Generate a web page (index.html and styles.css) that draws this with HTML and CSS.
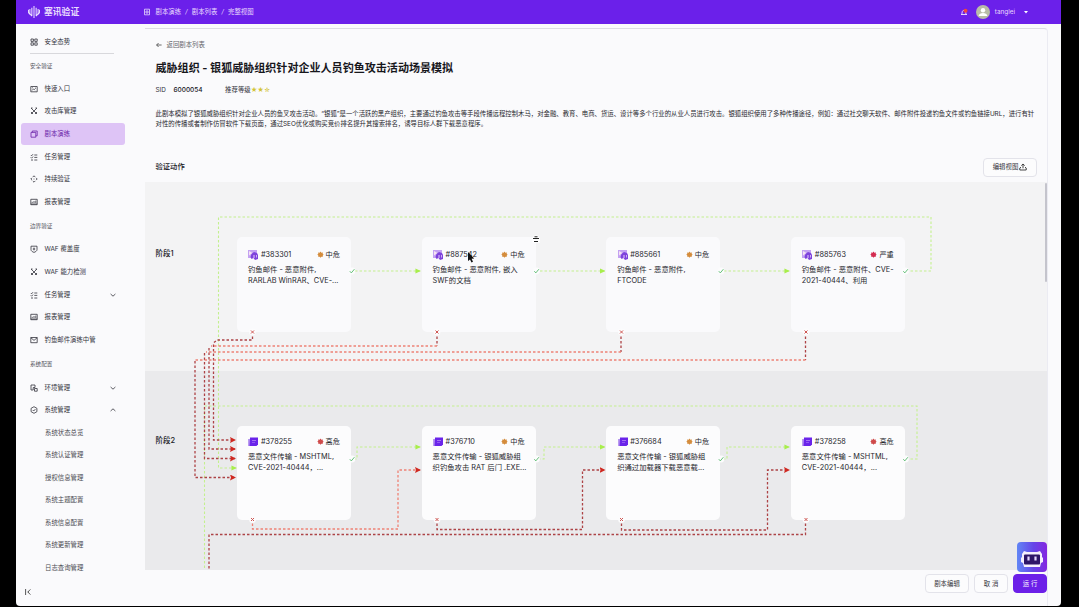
FILE: index.html
```html
<!DOCTYPE html>
<html lang="zh-CN">
<head>
    <meta charset="UTF-8">
    <meta name="viewport" content="width=device-width, initial-scale=1.0">
    <title>完整视图</title>
    <link rel="stylesheet" href="styles.css">
</head>
<body>
    <svg class="sprite">
        <symbol id="i-grid" viewBox="0 0 8 8"><path d="M1 1h2.4v2.4H1zM4.8 1h2.4v2.4H4.8zM1 4.8h2.4v2.4H1zM4.8 4.8h2.4v2.4H4.8z"/></symbol>
        <symbol id="i-image" viewBox="0 0 8 8"><path d="M.8 1.5h6.4v5.3H.8zM2 5.5l1.7-1.7 1.2 1.4M5 3.2h1M2 2.8h.8"/></symbol>
        <symbol id="i-swords" viewBox="0 0 8 8"><path d="M1 1l6 6M7 1L1 7M1 1h1.6M7 1H5.4M1 5l2 2M7 5L5 7"/></symbol>
        <symbol id="i-book" viewBox="0 0 8 8"><path d="M1 2.4h4.8v4.8H1zM2.3 2.4V1h4.9v4.8H5.8"/></symbol>
        <symbol id="i-crumb" viewBox="0 0 8 8"><path d="M1.5 1.2h5v5.6h-5zM3 3h2v2H3z"/></symbol>
        <symbol id="i-tasks" viewBox="0 0 8 8"><path d="M.8 2l.8.8L3 1.2M4.3 2h3M.8 4.4l.8.8L3 3.6M4.3 4.4h3M1 7h2M4.3 7h3"/></symbol>
        <symbol id="i-diamond" viewBox="0 0 8 8"><path d="M2.8 2L4 .8 5.2 2M2.8 6L4 7.2 5.2 6M2 2.8L.8 4 2 5.2M6 2.8L7.2 4 6 5.2M3.6 4h.8"/></symbol>
        <symbol id="i-report" viewBox="0 0 8 8"><path d="M.8 1.3h6.4v5.4H.8zM2.2 5V3.8M4 5V3M5.8 5V2.6M.8 6h6.4"/></symbol>
        <symbol id="i-shield" viewBox="0 0 8 8"><path d="M1 1.2h6v3.4C7 6 5.6 6.8 4 7.4 2.4 6.8 1 6 1 4.6zM4 2.6v2.8M2.8 4h2.4"/></symbol>
        <symbol id="i-mail" viewBox="0 0 8 8"><path d="M.8 1.5h6.4v5.2H.8zM.8 1.7L4 4.4l3.2-2.7"/></symbol>
        <symbol id="i-env" viewBox="0 0 8 8"><path d="M1 1h4v2.5H3.2V6H1zM4.5 4.5h2.7v2.7H4.5z"/></symbol>
        <symbol id="i-gear" viewBox="0 0 8 8"><path d="M4 .7l2.9 1.6v3.4L4 7.3 1.1 5.7V2.3zM2.7 4l1 1 1.7-1.9"/></symbol>
        <symbol id="i-down" viewBox="0 0 8 8"><path d="M1.6 3l2.4 2.2L6.4 3"/></symbol>
        <symbol id="i-up" viewBox="0 0 8 8"><path d="M1.6 5L4 2.8 6.4 5"/></symbol>
        <symbol id="i-node" viewBox="0 0 10 10">
            <path fill="#c3a2f2" d="M0 0h9v8H0z"/>
            <path fill="#f6e4f2" d="M1 1l3.500 2L1 5.500z"/>
            <path fill="#7d42dc" d="M3.500 4l2.500-2 3 1 1 2v4l-3 1-1.500-2-2 1-1-2z"/>
            <path fill="#e4c9fa" d="M5.500 5h1v3h-1zM8 5h.8v2.500H8z"/>
        </symbol>
        <symbol id="i-file" viewBox="0 0 10 10">
            <path fill="#b99af0" d="M0 2h3v7H0z"/>
            <path fill="#6a24ea" d="M2 .5h8v7L8.500 9H1.500z"/>
            <path fill="#b98df5" d="M4 3h4v.8H4zM4 5.400h3v.7H4z"/>
        </symbol>
        <symbol id="i-risk" viewBox="0 0 8 8">
            <path d="M4 .6l1 1.3 1.8-.2-.3 1.6L7.600 4l-1 1 .1 1.700-1.700-.1L4 7.600l-1-1-1.700.1.2-1.700L.4 4l1.100-.8-.3-1.600L3 1.900z"/>
        </symbol>
    </svg>

    <div class="app">
        <header class="topbar">
            <div class="brand">
                <svg class="brand-mark" viewBox="0 0 14 14"><path d="M7 0v14M4.500 2v9.800M9.500 2v9.800M2.200 3.500v5.300l2.300 3M11.800 3.500v5.300l-2.300 3M.5 4.500v3L2.200 10M13.500 4.500v3L11.800 10"/></svg>
                <span>塞讯验证</span>
            </div>
            <nav class="crumbs">
                <svg class="icon"><use href="#i-crumb"/></svg>
                <span>剧本演练</span><i>/</i><span>剧本列表</span><i>/</i><span>完整视图</span>
            </nav>
            <div class="user">
                <svg class="bell" viewBox="0 0 8 8"><path d="M1 6.500h6M1.800 6.300l.5-2.800C2.700 2 5 2 5.600 3.500l.4 2.800" fill="none" stroke="#fff" stroke-width=".8"/><circle cx="5.500" cy="2.800" r="2" fill="#f0443c"/></svg>
                <svg class="avatar" viewBox="0 0 14 14"><circle cx="7" cy="7" r="7" fill="#b9bca8"/><circle cx="7" cy="5.200" r="2.200" fill="#fff"/><path d="M2.600 11c.4-4 8.400-4 8.800 0z" fill="#fff"/></svg>
                <span>tanglei</span>
                <svg class="caret" viewBox="0 0 4 3"><path d="M0 0h4L2 2.600z" fill="#fff"/></svg>
            </div>
        </header>

        <aside class="sidebar">
            <a class="item"><svg class="icon"><use href="#i-grid"/></svg>安全态势</a>
            <hr>
            <h4>安全验证</h4>
            <a class="item"><svg class="icon"><use href="#i-image"/></svg>快速入口</a>
            <a class="item"><svg class="icon"><use href="#i-swords"/></svg>攻击库管理</a>
            <a class="item active"><svg class="icon"><use href="#i-book"/></svg>剧本演练</a>
            <a class="item"><svg class="icon"><use href="#i-tasks"/></svg>任务管理</a>
            <a class="item"><svg class="icon"><use href="#i-diamond"/></svg>持续验证</a>
            <a class="item"><svg class="icon"><use href="#i-report"/></svg>报表管理</a>
            <h4>边界验证</h4>
            <a class="item"><svg class="icon"><use href="#i-shield"/></svg>WAF 覆盖度</a>
            <a class="item"><svg class="icon"><use href="#i-swords"/></svg>WAF 能力检测</a>
            <a class="item"><svg class="icon"><use href="#i-tasks"/></svg>任务管理<svg class="icon chev"><use href="#i-down"/></svg></a>
            <a class="item"><svg class="icon"><use href="#i-report"/></svg>报表管理</a>
            <a class="item"><svg class="icon"><use href="#i-mail"/></svg>钓鱼邮件演练中管</a>
            <h4>系统配置</h4>
            <a class="item"><svg class="icon"><use href="#i-env"/></svg>环境管理<svg class="icon chev"><use href="#i-down"/></svg></a>
            <a class="item"><svg class="icon"><use href="#i-gear"/></svg>系统管理<svg class="icon chev"><use href="#i-up"/></svg></a>
            <a class="item sub">系统状态总览</a>
            <a class="item sub">系统认证管理</a>
            <a class="item sub">授权信息管理</a>
            <a class="item sub">系统主题配置</a>
            <a class="item sub">系统信息配置</a>
            <a class="item sub">系统更新管理</a>
            <a class="item sub">日志查询管理</a>
            <svg class="collapse" viewBox="0 0 6 8"><path d="M.6 1v6M5.400 1.400L2.800 4l2.600 2.600M2.800 4h1"/></svg>
        </aside>

        <main class="main">
            <section class="intro">
                <a class="back"><svg viewBox="0 0 6 6"><path d="M5.600 3H.6M2.600 1L.6 3l2 2"/></svg>返回剧本列表</a>
                <h1>威胁组织 - 银狐威胁组织针对企业人员钓鱼攻击活动场景模拟</h1>
                <div class="meta">
                    <span>SID</span><b>6000054</b><span class="level">推荐等级</span><span class="stars">★★☆</span>
                </div>
                <p class="desc">此剧本模拟了银狐威胁组织针对企业人员的鱼叉攻击活动。“银狐”是一个活跃的黑产组织，主要通过钓鱼攻击等手段传播远程控制木马，对金融、教育、电商、货运、设计等多个行业的从业人员进行攻击。银狐组织使用了多种传播途径，例如：通过社交聊天软件、邮件附件投递钓鱼文件或钓鱼链接URL，进行有针<br>对性的传播或者制作仿冒软件下载页面，通过SEO优化或购买竞价排名提升其搜索排名，诱导目标人群下载恶意程序。</p>
            </section>
            <div class="actions">
                <h2>验证动作</h2>
                <button class="edit">编辑视图<svg viewBox="0 0 8 8"><path d="M4 5.300V1M2.300 2.600L4 1l1.700 1.600M2 4.200L.8 5v2h6.400V5L6 4.200"/></svg></button>
            </div>

            <div class="flow">
                <section class="stage">
                    <h3>阶段1</h3>
                    <article class="card">
                        <header><svg><use href="#i-node"/></svg><b>#383301</b><span class="risk mid"><svg><use href="#i-risk"/></svg>中危</span></header>
                        <p>钓鱼邮件 - 恶意附件,<br>RARLAB WinRAR、CVE-...</p>
                    </article>
                    <article class="card">
                        <header><svg><use href="#i-node"/></svg><b>#887542</b><span class="risk mid"><svg><use href="#i-risk"/></svg>中危</span></header>
                        <p>钓鱼邮件 - 恶意附件, 嵌入<br>SWF的文档</p>
                    </article>
                    <article class="card">
                        <header><svg><use href="#i-node"/></svg><b>#885661</b><span class="risk mid"><svg><use href="#i-risk"/></svg>中危</span></header>
                        <p>钓鱼邮件 - 恶意附件,<br>FTCODE</p>
                    </article>
                    <article class="card">
                        <header><svg><use href="#i-node"/></svg><b>#885763</b><span class="risk severe"><svg><use href="#i-risk"/></svg>严重</span></header>
                        <p>钓鱼邮件 - 恶意附件、CVE-<br>2021-40444、利用</p>
                    </article>
                </section>
                <section class="stage second">
                    <h3>阶段2</h3>
                    <article class="card">
                        <header><svg><use href="#i-file"/></svg><b>#378255</b><span class="risk high"><svg><use href="#i-risk"/></svg>高危</span></header>
                        <p>恶意文件传输 - MSHTML,<br>CVE-2021-40444，...</p>
                    </article>
                    <article class="card">
                        <header><svg><use href="#i-file"/></svg><b>#376710</b><span class="risk mid"><svg><use href="#i-risk"/></svg>中危</span></header>
                        <p>恶意文件传输 - 银狐威胁组<br>织钓鱼攻击 RAT 后门 .EXE...</p>
                    </article>
                    <article class="card">
                        <header><svg><use href="#i-file"/></svg><b>#376684</b><span class="risk mid"><svg><use href="#i-risk"/></svg>中危</span></header>
                        <p>恶意文件传输 - 银狐威胁组<br>织通过加载器下载恶意载...</p>
                    </article>
                    <article class="card">
                        <header><svg><use href="#i-file"/></svg><b>#378258</b><span class="risk high"><svg><use href="#i-risk"/></svg>高危</span></header>
                        <p>恶意文件传输 - MSHTML,<br>CVE-2021-40444，...</p>
                    </article>
                </section>

                <svg class="edges" viewBox="145 182 902 388">
                    <defs>
                        <marker id="a-ok" viewBox="0 0 6 6" refX="5" refY="3" markerWidth="5.5" markerHeight="5.5" markerUnits="userSpaceOnUse"><path d="M0 .3L6 3 0 5.700z" fill="#a8ee4c"/></marker>
                        <marker id="a-no" viewBox="0 0 6 6" refX="5" refY="3" markerWidth="6" markerHeight="6" markerUnits="userSpaceOnUse"><path d="M0 0l6 3-6 3 1-3z" fill="#cf2820"/></marker>
                        <g id="ok"><circle r="3.4" fill="#fcfcfd"/><path d="M-2.200.2l1.500 1.700L2.400-1.800" fill="none" stroke="#55b96b" stroke-width=".9"/></g>
                        <g id="no"><circle r="3.4" fill="#fcfcfd"/><path d="M-1.500-1.500l3 3M1.500-1.500l-3 3" stroke="#cf5854" stroke-width="1"/></g>
                    </defs>
                    <!-- success routes -->
                    <g class="ok-line">
                        <path d="M906 271H931V217H218.500V468H236" marker-end="url(#a-ok)"/>
                        <path d="M355 271H420" marker-end="url(#a-ok)"/>
                        <path d="M540 271H604.500" marker-end="url(#a-ok)"/>
                        <path d="M724 271H789" marker-end="url(#a-ok)"/>
                        <path d="M354 459H357V447H420" marker-end="url(#a-ok)"/>
                        <path d="M538 459H544V447H604.500" marker-end="url(#a-ok)"/>
                        <path d="M723 459H727V447H789" marker-end="url(#a-ok)"/>
                        <path d="M906 459H917V406H204.500V570"/>
                    </g>
                    <!-- failure routes -->
                    <g class="no-line">
                        <path d="M252.500 332V340H217L213.500 343V440H235" marker-end="url(#a-no)"/>
                        <path d="M437 332V346"/>
                        <path class="soft" d="M437 346H211"/>
                        <path d="M209 348V449H235" marker-end="url(#a-no)"/>
                        <path d="M621 332V352"/>
                        <path class="soft" d="M621 352H206"/>
                        <path d="M204.500 353V458.500H235" marker-end="url(#a-no)"/>
                        <path d="M805.500 332V360"/>
                        <path class="soft" d="M805.500 360H195"/>
                        <path d="M195 361V477.500H235" marker-end="url(#a-no)"/>
                        <path class="soft" d="M252.500 519V529H398V470H420" marker-end="url(#a-no)"/>
                        <path d="M437 519V529.500H582.500V470H604.500" marker-end="url(#a-no)"/>
                        <path d="M621.500 519V530H767.500V470H789" marker-end="url(#a-no)"/>
                        <path d="M805.500 519V534.500H209V570"/>
                    </g>
                    <use href="#ok" x="352" y="271"/><use href="#ok" x="536.500" y="271"/><use href="#ok" x="721" y="271"/><use href="#ok" x="905.500" y="271"/>
                    <use href="#ok" x="352" y="459"/><use href="#ok" x="536.500" y="459"/><use href="#ok" x="721" y="459"/><use href="#ok" x="905.500" y="459"/>
                    <use href="#no" x="252.500" y="332"/><use href="#no" x="437" y="332"/><use href="#no" x="621.500" y="332"/><use href="#no" x="806" y="332"/>
                    <use href="#no" x="252.500" y="519.500"/><use href="#no" x="437" y="519.500"/><use href="#no" x="621.500" y="519.500"/><use href="#no" x="806" y="519.500"/>
                    <!-- delete handle and pointer -->
                    <path d="M533 238h6M534.500 236.500h3M533.500 238v3.500h5V238" fill="none" stroke="#fff" stroke-width="2.5"/>
                    <path d="M533 238.500h6M534.500 236.800h3M534 241.500h4" fill="none" stroke="#222" stroke-width="1"/>
                    <path d="M468 252v9l2-1.600 1.500 3.200 1.500-.8-1.400-3 2.600-.3z" fill="#111"/>
                </svg>
            </div>

            <footer class="footer">
                <button>剧本编辑</button>
                <button>取 消</button>
                <button class="primary">运 行</button>
            </footer>
            <i class="scrollbar"></i>
            <svg class="robot" viewBox="0 0 30 30">
                <defs><linearGradient id="rg"><stop offset="0" stop-color="#6186f5"/><stop offset=".55" stop-color="#6545e8"/><stop offset="1" stop-color="#8426e0"/></linearGradient></defs>
                <rect width="30" height="30" rx="4" fill="url(#rg)"/>
                <path d="M7 9l3 1h10l3-1 2 3v3l1 1v4l-2 1-1 4H7l-1-4-2-1v-4l1-1v-3z" fill="#f5effc"/>
                <rect x="7" y="12.500" width="16" height="10" rx="1" fill="#2e1568"/>
                <path d="M11.500 14.500v4M18.500 14.500v4" stroke="#e3d6ff" stroke-width="2.2"/>
            </svg>
        </main>
    </div>
</body>
</html>
```
FILE: styles.css
```css
* {
    box-sizing: border-box;
}
body {
    margin: 0;
    height: 607px;
    padding: 0 18px 1px 16px;
    overflow: hidden;
    background: #000;
    color: #34343c;
    font: 6.4px/10px Inter, "Noto Sans CJK SC", sans-serif;
}
h1, h2, h3, h4, p {
    margin: 0;
}
.sprite {
    display: none;
}
.app {
    display: grid;
    grid-template: 24px 1fr / 129px 1fr;
    height: 606px;
    overflow: hidden;
    background: #fafafc;
    border-radius: 0 0 4px 4px;
}
.icon {
    width: 8px;
    height: 8px;
    flex: none;
    fill: none;
    stroke: currentColor;
    stroke-width: .8;
}

/* Top bar */
.topbar {
    grid-column: 1 / 3;
    display: flex;
    align-items: center;
    background: #6b20ea;
    color: #e9dcfd;
}
.brand {
    display: flex;
    align-items: center;
    gap: 4px;
    width: 127px;
    padding-left: 12px;
    font-size: 8.8px;
    font-weight: bold;
}
.brand-mark {
    width: 12px;
    height: 14px;
    fill: none;
    stroke: #efe5ff;
    stroke-width: 1.2;
}
.crumbs {
    display: flex;
    align-items: center;
}
.crumbs .icon {
    margin-right: 4.5px;
}
.crumbs i {
    width: 10.7px;
    text-align: center;
}
.user {
    display: flex;
    align-items: center;
    margin-left: auto;
    padding-right: 33px;
}
.bell {
    width: 8px;
    height: 8px;
    margin-right: 8px;
}
.avatar {
    width: 14px;
    height: 14px;
    margin-right: 5px;
}
.caret {
    width: 4px;
    height: 3px;
    margin-left: 9px;
}

/* Sidebar */
.sidebar {
    display: flex;
    flex-direction: column;
    padding: 6.6px 20px 0 5px;
}
.item {
    display: flex;
    flex: none;
    align-items: center;
    gap: 7px;
    height: 22.55px;
    padding: 0 8px 0 8.5px;
    border-radius: 3px;
}
.item.active {
    background: #dec4f6;
    color: #6a22a8;
}
.item.sub {
    padding-left: 24px;
    color: #4b4b52;
}
.chev {
    margin-left: auto;
}
.sidebar hr {
    width: 84px;
    margin: 0 0 6.5px 9px;
    border: 0;
    border-top: 1px solid #d8d8dc;
}
.sidebar h4 {
    padding-left: 9px;
    height: 17px;
    font-size: 5.6px;
    font-weight: normal;
    color: #55555c;
}
.item + h4 {
    margin-top: 8.3px;
}
.collapse {
    width: 6px;
    height: 8px;
    margin: 9px 0 0 4px;
    fill: none;
    stroke: #444;
    stroke-width: .9;
}

/* Main panel */
.main {
    position: relative;
    display: flex;
    flex-direction: column;
    width: 903px;
    margin-top: 4px;
    border-top: 1px solid #dcdce4;
    border-right: 1px solid #ebebf2;
    border-top-right-radius: 4px;
}
.intro {
    height: 111px;
    padding: 11px 0 0 10.5px;
}
.back {
    display: flex;
    align-items: center;
    gap: 5px;
    color: #66666c;
}
.back svg {
    width: 6px;
    height: 6px;
    fill: none;
    stroke: #444;
    stroke-width: .8;
}
h1 {
    margin-top: 10px;
    font-size: 11.05px;
    line-height: 16px;
    color: #17171c;
}
.meta {
    display: flex;
    margin-top: 9px;
}
.meta b {
    margin-left: 7.5px;
    font-weight: 500;
    font-size: 6.5px;
    color: #17171c;
}
.level {
    margin-left: 22.5px;
}
.stars {
    color: #d3c437;
    letter-spacing: -.2px;
}
.desc {
    margin-top: 14px;
    font-size: 6.38px;
    white-space: nowrap;
    color: #26262c;
}
.actions {
    display: flex;
    align-items: center;
    justify-content: space-between;
    height: 42px;
    padding: 12px 10px 0 10.5px;
}
.actions h2 {
    font-size: 7.3px;
    font-weight: 500;
    color: #17171c;
}
button {
    display: flex;
    align-items: center;
    justify-content: center;
    height: 19px;
    padding: 0;
    border: 1px solid #e3e3ea;
    border-radius: 4px;
    background: #fcfcfd;
    font: inherit;
    color: #34343c;
}
.edit {
    width: 54px;
}
.edit svg {
    width: 8px;
    height: 8px;
    margin-left: 1px;
    fill: none;
    stroke: #333;
    stroke-width: .9;
}

/* Flow chart */
.flow {
    position: relative;
    height: 388px;
}
.stage {
    display: grid;
    grid-template-columns: 21.4px repeat(4, 114px);
    column-gap: 70.6px;
    align-content: start;
    height: 189px;
    padding-top: 55px;
    background: #f3f3f4;
}
.stage.second {
    height: 199px;
    background: #eaeaec;
}
h3 {
    width: 60px;
    padding: 10.6px 0 0 10.5px;
    font-size: 7.5px;
    line-height: 11px;
    font-weight: 500;
    color: #222228;
}
.card {
    height: 95px;
    padding: 12.5px 11px 0;
    border-radius: 5px;
    background: #fafafc;
    color: #26262c;
}
.second .card {
    height: 94px;
    padding-top: 10.6px;
    background: #fcfcfd;
}
.second h3 {
    padding-top: 9px;
}
.card header {
    display: flex;
    align-items: center;
    height: 10px;
}
.card header > svg {
    width: 10px;
    height: 10px;
    margin: 1px 2.5px 0 .5px;
}
.card b {
    font-size: 7.3px;
    font-weight: 400;
}
.card p {
    margin-top: 4px;
    font-size: 7.35px;
    line-height: 11.3px;
    white-space: nowrap;
}
.risk {
    display: flex;
    align-items: center;
    gap: 2px;
    margin-left: auto;
    font-size: 7.2px;
}
.risk svg {
    width: 7px;
    height: 7px;
}
.mid svg {
    fill: #d48c3c;
}
.high svg {
    fill: #cf4a4a;
}
.severe svg {
    fill: #d42c50;
}
.edges {
    position: absolute;
    inset: 0;
    width: 902px;
    height: 388px;
}
.ok-line {
    fill: none;
    stroke: #c3f08e;
    stroke-width: 1.1;
    stroke-dasharray: 2.5 2;
}
.no-line {
    fill: none;
    stroke: #ad4346;
    stroke-width: 1.3;
    stroke-dasharray: 2.5 2;
}
.no-line .soft {
    stroke: #ee8275;
}

/* Footer buttons */
.footer {
    display: flex;
    justify-content: flex-end;
    gap: 5px;
    padding-top: 4px;
}
.footer button {
    width: 34px;
}
.footer button:first-child {
    width: 44px;
}
.footer .primary {
    border-color: #6c20e8;
    background: #6c20e8;
    color: #fff;
}
.scrollbar {
    position: absolute;
    right: 0;
    top: 154px;
    width: 2.5px;
    height: 99px;
    border-radius: 1px;
    background: #c4c4cc;
}
.robot {
    position: absolute;
    right: 0;
    top: 513px;
    width: 30px;
    height: 30px;
}
```
